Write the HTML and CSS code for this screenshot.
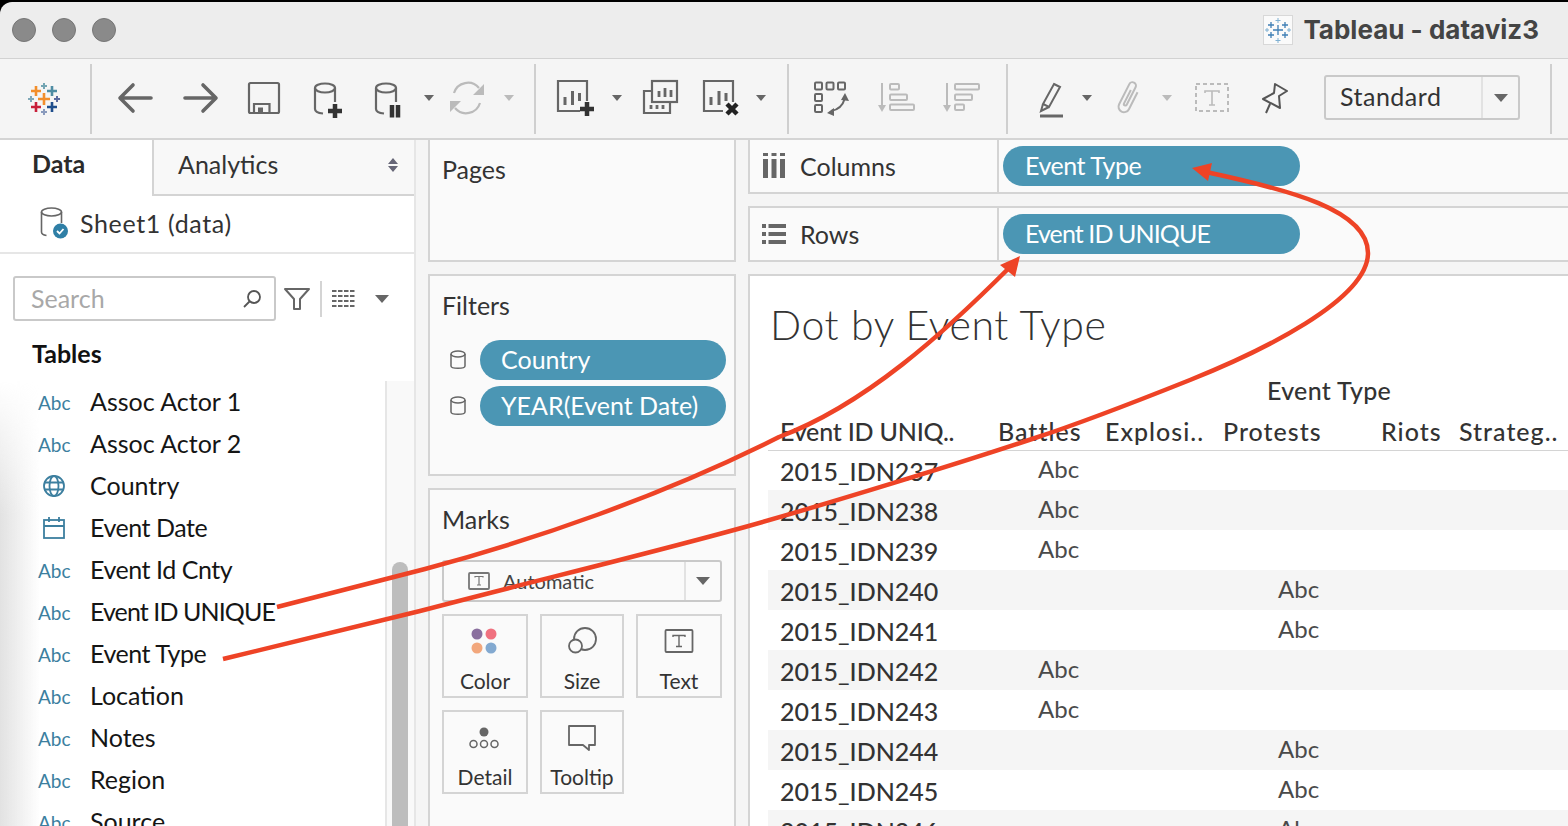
FILE: index.html
```html
<!DOCTYPE html>
<html lang="en">
<head>
<meta charset="utf-8">
<title>Tableau - dataviz3</title>
<link rel="stylesheet" href="styles.css">
</head>
<body>
<div class="app">
  <header class="titlebar">
    <div class="lights"><span class="light"></span><span class="light"></span><span class="light"></span></div>
    <div class="wintitle">
      <svg class="tile" width="30" height="30" viewBox="0 0 30 30"><rect x=".5" y=".5" width="29" height="29" fill="#fafafa" stroke="#d8d8d8"/><g stroke="#3f7fb5" stroke-width="1.300" fill="none"><path d="M15 10v10M10 15h10"/><path d="M8 7v6M5 10h6M22 7v6M19 10h6M8 17v6M5 20h6M22 17v6M19 20h6"/><path d="M15 3v5M12.500 5.500h5M15 23v5M12.500 25.500h5M4 13v4M2 15h4M26 13v4M24 15h4" stroke-width="1" stroke="#7fb0d2"/></g></svg>
      <span class="wintitle-text">Tableau - dataviz3</span>
    </div>
  </header>

  <nav class="toolbar">
    <svg class="logo" width="40" height="40" viewBox="24 78 40 40" fill="none" stroke-width="2.600"><path d="M38 99h12M44 93v12" stroke="#f28e2b"/><path d="M31 91h10M36 86v10" stroke="#f28e2b"/><path d="M47 91h10M52 86v10" stroke="#4e8ca3"/><path d="M31 107h10M36 102v10" stroke="#c8203a"/><path d="M47 107h10M52 102v10" stroke="#1f4e8c"/><path d="M41 86h6M44 83v6" stroke="#73a5b3" stroke-width="2"/><path d="M28 99h6M31 96v6" stroke="#7fa8b8" stroke-width="2"/><path d="M54 99h6M57 96v6" stroke="#5a6aa0" stroke-width="2"/><path d="M41 112h6M44 109v6" stroke="#8a9bbd" stroke-width="2"/></svg>
    <span class="sep"></span>
    <svg class="ico t-back" width="40" height="40" viewBox="0 0 40 40" fill="none" stroke="#666" stroke-width="3.600" stroke-linecap="round" stroke-linejoin="round"><path d="M35 20H5M17 7 4 20l13 13"/></svg>
    <svg class="ico t-fwd" width="40" height="40" viewBox="0 0 40 40" fill="none" stroke="#666" stroke-width="3.600" stroke-linecap="round" stroke-linejoin="round"><path d="M5 20h30M23 7l13 13-13 13"/></svg>
    <svg class="ico t-save" width="40" height="40" viewBox="0 0 40 40" fill="none" stroke="#666" stroke-width="2.200"><rect x="5" y="5" width="30" height="30" rx="1.500"/><path d="M10 35V26h15.500v9"/><rect x="14" y="29.500" width="5" height="5.500" fill="#666" stroke="none"/></svg>
    <svg class="ico t-ds" width="40" height="40" viewBox="0 0 40 40" fill="none" stroke="#666" stroke-width="2.200"><ellipse cx="18" cy="10" rx="10" ry="4.500"/><path d="M8 10v21c0 2.500 3 4 8 4.500M28 10v14"/><path d="M21 33h14M28 26v14" stroke="#333" stroke-width="4.500"/></svg>
    <svg class="ico t-pause" width="40" height="40" viewBox="0 0 40 40" fill="none" stroke="#666" stroke-width="2.200"><ellipse cx="18" cy="10" rx="10" ry="4.500"/><path d="M8 10v21c0 2.500 3 4 8 4.500M28 10v14"/><path d="M24 27v12.500M30 27v12.500" stroke="#333" stroke-width="4.500"/></svg>
    <span class="caret t-c1"></span>
    <svg class="ico t-refresh" width="40" height="40" viewBox="0 0 40 40" fill="none" stroke="#bbb" stroke-width="2.200"><path d="M7 15a14.500 14.500 0 0 1 25-5M33 25a14.500 14.500 0 0 1-25 5"/><path d="M37 6v11H26zM3 34V23h11z" fill="#bbb" stroke="none"/></svg>
    <span class="caret light-caret t-c2"></span>
    <span class="sep t-s2"></span>
    <svg class="ico t-new" width="40" height="40" viewBox="0 0 40 40" fill="none" stroke="#666" stroke-width="2.200"><path d="M25 33H3V3h29v20"/><path d="M10 19v8M17.500 13v14M24.500 15v8" stroke-width="3"/><path d="M25 31h14M32 24v14" stroke="#333" stroke-width="4.500"/></svg>
    <span class="caret t-c3"></span>
    <svg class="ico t-dup" width="40" height="40" viewBox="0 0 40 40" fill="none" stroke="#666" stroke-width="2.200"><rect x="12" y="3" width="25" height="21"/><path d="M12 13H4v22h26v-11"/><path d="M19 19v-6M25 19V10M31 19v-7" stroke-width="2.800"/><path d="M11 31v-4M17 31v-4M23 31v-4" stroke-width="2.800"/></svg>
    <svg class="ico t-clear" width="40" height="40" viewBox="0 0 40 40" fill="none" stroke="#666" stroke-width="2.200"><path d="M21 33H2V3h29v21"/><path d="M9 27v-8M17 27V13M24 23v-8" stroke-width="3"/><path d="M25 26l10 10M35 26 25 36" stroke="#222" stroke-width="4.500"/></svg>
    <span class="caret t-c4"></span>
    <span class="sep t-s3"></span>
    <svg class="ico t-swap" width="40" height="40" viewBox="0 0 40 40" fill="none" stroke="#666" stroke-width="2"><rect x="4" y="4.500" width="7" height="7" rx="1"/><rect x="15.500" y="4.500" width="7" height="7" rx="1"/><rect x="27" y="4.500" width="7" height="7" rx="1"/><rect x="4" y="16" width="7" height="7" rx="1"/><rect x="4" y="27" width="7" height="7" rx="1"/><path d="M20 33c7-1 12-6 14-13"/><path d="M34 15l4 8-8-1zM16 35l7-5v8z" fill="#666" stroke="none"/></svg>
    <svg class="ico t-asc" width="40" height="40" viewBox="0 0 40 40" fill="none" stroke="#bbb" stroke-width="2"><path d="M6 5v27"/><path d="M2 27h8l-4 7z" fill="#bbb" stroke="none"/><rect x="14" y="6" width="9" height="5.500" rx="1"/><rect x="14" y="16.500" width="17" height="5.500" rx="1"/><rect x="14" y="26.500" width="24" height="5.500" rx="1"/></svg>
    <svg class="ico t-desc" width="40" height="40" viewBox="0 0 40 40" fill="none" stroke="#bbb" stroke-width="2"><path d="M7 5v27"/><path d="M3 27h8l-4 7z" fill="#bbb" stroke="none"/><rect x="15" y="6" width="24" height="5.500" rx="1"/><rect x="15" y="16.500" width="17" height="5.500" rx="1"/><rect x="15" y="26.500" width="9" height="5.500" rx="1"/></svg>
    <span class="sep t-s4"></span>
    <svg class="ico t-high" width="40" height="40" viewBox="0 0 40 40" fill="none" stroke="#666" stroke-width="2"><path d="M23 6l6 3-11 20-6-3zM12 26l-2 7 8-4"/><path d="M9 38h23" stroke-width="3"/></svg>
    <span class="caret t-c5"></span>
    <svg class="ico t-clip" width="40" height="40" viewBox="0 0 40 40" fill="none" stroke="#bbb" stroke-width="2"><g transform="rotate(27 20 20)"><path d="M25 11v19a5.500 5.500 0 0 1-11 0V7.500a3.500 3.500 0 0 1 7 0V27a1.500 1.500 0 0 1-3 0V12"/></g></svg>
    <span class="caret light-caret t-c6"></span>
    <svg class="ico t-box" width="40" height="40" viewBox="0 0 40 40" fill="none" stroke="#bbb" stroke-width="2"><rect x="4" y="6" width="32" height="27" stroke-dasharray="4 3"/><path d="M13 15v-2h14v2M20 13v14M17 27h6" stroke-width="1.600"/></svg>
    <svg class="ico t-pin" width="40" height="40" viewBox="0 0 40 40" fill="none" stroke="#555" stroke-width="2" stroke-linejoin="round"><path d="M20 6l12 7-8 5 1 12L8 21l11-6zM15 26l-4 9"/></svg>
    <div class="select"><span class="select-text">Standard</span><span class="select-btn"><span class="caret big-caret"></span></span></div>
    <span class="sep t-s5"></span>
  </nav>

  <main class="main">
    <aside class="sidebar">
      <div class="tabs">
        <div class="tab-data">Data</div>
        <div class="tab-analytics"><span>Analytics</span>
          <svg class="updown" width="10" height="14" viewBox="0 0 10 14" fill="#667"><path d="M5 0l5 6H0zM5 14 0 8h10z"/></svg>
        </div>
      </div>
      <div class="source">
        <svg width="29" height="32" viewBox="0 0 29 32" fill="none" stroke="#666" stroke-width="1.600"><ellipse cx="11.500" cy="5" rx="10" ry="4"/><path d="M1.500 5v20c0 2 2 3 5 3.500M21.500 5v11"/><circle cx="20.500" cy="24" r="7.500" fill="#2f7fa6" stroke="none"/><path d="M17 24l2.500 2.500 4-4.500" stroke="#fff" stroke-width="1.800"/></svg>
        <span>Sheet1 (data)</span>
      </div>
      <div class="searchrow">
        <div class="search"><span class="search-text">Search</span>
          <svg width="20" height="20" viewBox="0 0 20 20" fill="none" stroke="#555" stroke-width="1.800"><circle cx="12" cy="8" r="6"/><path d="M7.500 12.500 2 18"/></svg>
        </div>
        <svg class="funnel" width="28" height="26" viewBox="0 0 28 26" fill="none" stroke="#666" stroke-width="2" stroke-linejoin="round"><path d="M2 3h24l-9 10v10h-6V13z"/></svg>
        <span class="vsep"></span>
        <svg class="listicon" width="24" height="20" viewBox="0 0 24 20" fill="none" stroke="#666" stroke-width="2" stroke-dasharray="4.500 1.500"><path d="M0 2h24M0 7h24M0 12h24M0 17h24"/></svg>
        <span class="caret big-caret list-caret"></span>
      </div>
      <h2 class="tables">Tables</h2>
      <div class="listwrap">
        <ul class="fields">
          <li><span class="abc">Abc</span><span>Assoc Actor 1</span></li>
          <li><span class="abc">Abc</span><span>Assoc Actor 2</span></li>
          <li><span class="abc"><svg width="24" height="24" viewBox="0 0 24 24" fill="none" stroke="#3c7f9f" stroke-width="1.800"><circle cx="12" cy="12" r="10"/><ellipse cx="12" cy="12" rx="4.500" ry="10"/><path d="M2 8.500h20M2 15.500h20"/></svg></span><span>Country</span></li>
          <li><span class="abc"><svg width="24" height="24" viewBox="0 0 24 24" fill="none" stroke="#3c7f9f" stroke-width="1.800"><rect x="2" y="4" width="20" height="18"/><path d="M2 10h20M7 1v5M17 1v5"/></svg></span><span class="ev">Event Date</span></li>
          <li><span class="abc">Abc</span><span class="ev">Event Id Cnty</span></li>
          <li><span class="abc">Abc</span><span class="caps">Event ID UNIQUE</span></li>
          <li><span class="abc">Abc</span><span class="ev">Event Type</span></li>
          <li><span class="abc">Abc</span><span>Location</span></li>
          <li><span class="abc">Abc</span><span>Notes</span></li>
          <li><span class="abc">Abc</span><span>Region</span></li>
          <li><span class="abc">Abc</span><span>Source</span></li>
        </ul>
        <div class="track"><div class="thumb"></div></div>
      </div>
    </aside>

    <section class="cards">
      <div class="card card-pages"><h3>Pages</h3></div>
      <div class="card card-filters">
        <h3>Filters</h3>
        <div class="filter"><svg class="cyl" width="18" height="20" viewBox="0 0 18 20" fill="none" stroke="#666" stroke-width="1.500"><ellipse cx="9" cy="4" rx="7" ry="3"/><path d="M2 4v12c0 3 14 3 14 0V4"/></svg><span class="pill">Country</span></div>
        <div class="filter"><svg class="cyl" width="18" height="20" viewBox="0 0 18 20" fill="none" stroke="#666" stroke-width="1.500"><ellipse cx="9" cy="4" rx="7" ry="3"/><path d="M2 4v12c0 3 14 3 14 0V4"/></svg><span class="pill">YEAR(Event Date)</span></div>
      </div>
      <div class="card card-marks">
        <h3>Marks</h3>
        <div class="marktype">
          <svg width="22" height="18" viewBox="0 0 22 18" fill="none" stroke="#777" stroke-width="1.800"><rect x="1" y="1" width="20" height="16" rx="1"/><path d="M7 5.500V4.500h8v1M11 4.500v8.500M9 13h4" stroke-width="1.200"/></svg>
          <span class="marktype-text">Automatic</span>
          <span class="marktype-btn"><span class="caret big-caret"></span></span>
        </div>
        <div class="markgrid">
          <div class="mark"><svg width="30" height="28" viewBox="0 0 30 28"><circle cx="8" cy="7" r="5.500" fill="#8a6f9e"/><circle cx="22" cy="7" r="5.500" fill="#f0717f"/><circle cx="8" cy="21" r="5.500" fill="#f2a77c"/><circle cx="22" cy="21" r="5.500" fill="#83a9d0"/></svg><span>Color</span></div>
          <div class="mark"><svg width="30" height="28" viewBox="0 0 30 28" fill="none" stroke="#666" stroke-width="1.800"><circle cx="18" cy="12" r="11"/><circle cx="8.500" cy="19" r="6.500" fill="#fafafa"/></svg><span>Size</span></div>
          <div class="mark"><svg width="30" height="28" viewBox="0 0 30 28" fill="none" stroke="#666" stroke-width="1.800"><rect x="1.500" y="3" width="27" height="22" rx="1"/><path d="M9 10V8.500h12V10M15 8.500v11M12 19.500h6" stroke-width="1.400"/></svg><span>Text</span></div>
          <div class="mark"><svg width="30" height="28" viewBox="0 0 30 28" fill="none" stroke="#666" stroke-width="1.500"><circle cx="15" cy="9" r="4.500" fill="#666" stroke="none"/><circle cx="4.500" cy="21" r="3.500"/><circle cx="15" cy="21" r="3.500"/><circle cx="25.500" cy="21" r="3.500"/></svg><span>Detail</span></div>
          <div class="mark"><svg width="30" height="28" viewBox="0 0 30 28" fill="none" stroke="#666" stroke-width="1.800" stroke-linejoin="round"><path d="M2 3h26v19h-6v5l-6-5H2z"/></svg><span>Tooltip</span></div>
        </div>
      </div>
    </section>

    <section class="work">
      <div class="shelf">
        <div class="shelf-label">
          <svg width="24" height="26" viewBox="0 0 24 26" fill="#666"><rect x="1" y="0" width="5" height="3"/><rect x="9.500" y="0" width="5" height="3"/><rect x="18" y="0" width="5" height="3"/><rect x="1" y="6" width="5" height="19"/><rect x="9.500" y="6" width="5" height="19"/><rect x="18" y="6" width="5" height="19"/></svg>
          <span>Columns</span>
        </div>
        <div class="shelf-body"><span class="pill pill-shelf ev">Event Type</span></div>
      </div>
      <div class="shelf">
        <div class="shelf-label">
          <svg width="24" height="26" viewBox="0 0 24 26" fill="#666"><rect x="0" y="3" width="4" height="4"/><rect x="6.500" y="3" width="17.500" height="4"/><rect x="0" y="11" width="4" height="4"/><rect x="6.500" y="11" width="17.500" height="4"/><rect x="0" y="19" width="4" height="4"/><rect x="6.500" y="19" width="17.500" height="4"/></svg>
          <span>Rows</span>
        </div>
        <div class="shelf-body"><span class="pill pill-shelf caps">Event ID UNIQUE</span></div>
      </div>
      <div class="viz">
        <h1 class="viz-title">Dot by Event Type</h1>
        <div class="viz-group">Event Type</div>
        <div class="viz-head">
          <span class="h-id">Event ID UNIQ..</span><span class="h-bat">Battles</span><span class="h-exp">Explosi..</span><span class="h-pro">Protests</span><span class="h-rio">Riots</span><span>Strateg..</span>
        </div>
        <div class="row"><span class="id">2015_IDN237</span><span class="val">Abc</span></div>
        <div class="row alt"><span class="id">2015_IDN238</span><span class="val">Abc</span></div>
        <div class="row"><span class="id">2015_IDN239</span><span class="val">Abc</span></div>
        <div class="row alt"><span class="id">2015_IDN240</span><span></span><span class="val">Abc</span></div>
        <div class="row"><span class="id">2015_IDN241</span><span></span><span class="val">Abc</span></div>
        <div class="row alt"><span class="id">2015_IDN242</span><span class="val">Abc</span></div>
        <div class="row"><span class="id">2015_IDN243</span><span class="val">Abc</span></div>
        <div class="row alt"><span class="id">2015_IDN244</span><span></span><span class="val">Abc</span></div>
        <div class="row"><span class="id">2015_IDN245</span><span></span><span class="val">Abc</span></div>
        <div class="row alt"><span class="id">2015_IDN246</span><span></span><span class="val">Abc</span></div>
      </div>
    </section>
  </main>

  <svg class="arrows" width="1568" height="826" viewBox="0 0 1568 826" fill="none" stroke="#ee4326" stroke-width="4.500">
    <path d="M277 607 425 569C530 541 660 497 779 437 865 405 945 332 1010 267"/>
    <path d="M1020 256 1000 265 1015 277Z" fill="#ee4326" stroke="none"/>
    <path d="M223 659 420 611C530 582 640 556 745 527 830 503 960 463 1035 438 1090 420 1140 400 1190 380 1260 352 1368 300 1368 253 1368 210 1290 190 1206 172"/>
    <path d="M1192 168 1212 163 1208 181Z" fill="#ee4326" stroke="none"/>
  </svg>
</div>
</body>
</html>
```

FILE: styles.css
```css
* { box-sizing: border-box; }
html, body { margin: 0; padding: 0; }
body {
  width: 1568px;
  height: 826px;
  overflow: hidden;
  background: #000;
  font-family: Lato, "Noto Sans", sans-serif;
  color: #333;
}
.app {
  position: relative;
  width: 1568px;
  height: 826px;
  padding-top: 2px;
  overflow: hidden;
  display: flex;
  flex-direction: column;
}

/* title bar */
.titlebar {
  height: 57px;
  flex: none;
  background: #ededed;
  border-top-left-radius: 12px;
  border-bottom: 1px solid #d2d2d2;
  display: flex;
  align-items: center;
  justify-content: space-between;
  padding: 0 29px 1px 12px;
}
.lights { display: flex; gap: 16px; }
.light {
  width: 24px;
  height: 24px;
  border-radius: 50%;
  background: #8a8a8a;
  border: 1px solid #767676;
}
.wintitle { display: flex; align-items: center; gap: 10px; }
.tile { display: block; }
.wintitle-text {
  font-family: Inter, "Liberation Sans", sans-serif;
  font-weight: 700;
  font-size: 26px;
  color: #444;
}

/* toolbar */
.toolbar {
  height: 79px;
  flex: none;
  background: #f5f5f5;
  display: flex;
  align-items: center;
  padding: 0 0 1px 24px;
}
.logo { flex: none; }
.ico { flex: none; display: block; }
.sep { width: 2px; height: 70px; background: #cfcfcf; flex: none; margin: 1px 0 0 26px; }
.caret {
  display: inline-block;
  width: 0;
  height: 0;
  flex: none;
  border-left: 5px solid transparent;
  border-right: 5px solid transparent;
  border-top: 6px solid #666;
}
.big-caret {
  border-left-width: 7px;
  border-right-width: 7px;
  border-top-width: 8px;
}
.light-caret { border-top-color: #bbb; }
.t-back { margin-left: 24px; }
.t-fwd { margin-left: 24px; }
.t-save { margin-left: 24px; }
.t-ds { margin-left: 23px; }
.t-pause { margin-left: 21px; }
.t-c1 { margin-left: 16px; }
.t-refresh { margin-left: 13px; }
.t-c2 { margin-left: 17px; }
.sep.t-s2 { margin-left: 20px; }
.t-new { margin-left: 19px; }
.t-c3 { margin-left: 17px; }
.t-dup { margin-left: 18px; }
.t-clear { margin-left: 22px; }
.t-c4 { margin-left: 14px; }
.sep.t-s3 { margin-left: 21px; }
.t-swap { margin-left: 22px; }
.t-asc { margin-left: 25px; }
.t-desc { margin-left: 24px; }
.sep.t-s4 { margin-left: 26px; }
.t-high { margin-left: 23px; }
.t-c5 { margin-left: 11px; }
.t-clip { margin-left: 17px; }
.t-c6 { margin-left: 13px; }
.t-box { margin-left: 20px; }
.t-pin { margin-left: 23px; }
.select {
  flex: none;
  margin: 0 0 1px 29px;
  width: 196px;
  height: 45px;
  border: 2px solid #c9c9c9;
  border-radius: 3px;
  display: flex;
  align-items: center;
}
.select-text { flex: 1; padding: 0 0 3px 14px; font-size: 25px; letter-spacing: .5px; color: #333; }
.select-btn {
  width: 37px;
  height: 100%;
  border-left: 2px solid #e2e2e2;
  display: flex;
  align-items: center;
  justify-content: center;
}
.sep.t-s5 { margin-left: 30px; }

/* main */
.main {
  flex: 1;
  min-height: 0;
  display: flex;
  background: #f5f5f5;
  border-top: 2px solid #d4d4d4;
}

/* sidebar */
.sidebar {
  flex: none;
  width: 416px;
  background: #fff;
  border-right: 2px solid #e6e6e6;
  display: flex;
  flex-direction: column;
  overflow: hidden;
}
.tabs { display: flex; height: 56px; flex: none; }
.tab-data {
  width: 152px;
  padding: 8px 0 0 32px;
  font-size: 25px;
  font-weight: 700;
  color: #2b2b2b;
}
.tab-analytics {
  flex: 1;
  background: #f8f8f8;
  border-left: 2px solid #d4d4d4;
  border-bottom: 2px solid #d4d4d4;
  padding: 9px 16px 0 24px;
  font-size: 25px;
  color: #333;
  display: flex;
  justify-content: space-between;
}
.updown { margin-top: 9px; }
.source {
  height: 58px;
  flex: none;
  display: flex;
  align-items: center;
  gap: 11px;
  padding: 0 0 2px 40px;
  border-bottom: 2px solid #e6e6e6;
  font-size: 25px;
  letter-spacing: .65px;
  color: #333;
}
.searchrow {
  flex: none;
  display: flex;
  align-items: center;
  margin-top: 22px;
  padding-left: 13px;
}
.search {
  width: 263px;
  height: 45px;
  border: 2px solid #c9c9c9;
  border-radius: 3px;
  display: flex;
  align-items: center;
  justify-content: space-between;
  padding: 0 12px 0 16px;
  font-size: 25px;
  color: #a8a8a8;
}
.search-text { padding-bottom: 2px; }
.funnel { margin-left: 7px; }
.vsep { width: 2px; height: 36px; background: #d4d4d4; margin-left: 9px; }
.listicon { margin-left: 10px; }
.list-caret { margin-left: 19px; }
.tables {
  flex: none;
  margin: 16px 0 0;
  padding-left: 32px;
  height: 44px;
  font-size: 25px;
  line-height: 32px;
  font-weight: 700;
  color: #111;
}
.listwrap {
  position: relative;
  flex: 1;
  min-height: 0;
  display: flex;
}
.listwrap::before {
  content: "";
  position: absolute;
  left: 0;
  top: 0;
  bottom: 0;
  width: 40px;
  background: linear-gradient(90deg, #e2e2e2, rgba(255,255,255,0));
  -webkit-mask-image: linear-gradient(180deg, transparent, #000 30%);
  mask-image: linear-gradient(180deg, transparent, #000 30%);
}
.fields {
  position: relative;
  flex: none;
  width: 385px;
  list-style: none;
  margin: 0;
  padding: 0;
  font-size: 25px;
  color: #151515;
}
.fields li {
  height: 42px;
  display: flex;
  align-items: center;
  padding-bottom: 2px;
}
.ev { letter-spacing: -.45px; }
.caps { letter-spacing: -.9px; }
.abc {
  width: 90px;
  padding: 2px 0 0 38px;
  flex: none;
  font-size: 19px;
  color: #3c7f9f;
  display: flex;
}
.abc svg { margin-left: 4px; display: block; }
.track {
  flex: 1;
  background: #f9f9f9;
  border-left: 2px solid #e6e6e6;
  padding: 181px 0 0 5px;
}
.thumb {
  width: 16px;
  height: 400px;
  background: #bdbdbd;
  border-radius: 8px 8px 0 0;
}

/* middle cards */
.cards {
  flex: none;
  width: 308px;
  margin-left: 12px;
  margin-top: -2px;
  display: flex;
  flex-direction: column;
  gap: 12px;
}
.card {
  flex: none;
  background: #fafafa;
  border: 2px solid #d4d4d4;
  padding: 0 12px;
}
.card h3 {
  margin: 0;
  font-size: 25px;
  font-weight: 400;
  color: #333;
}
.card-pages { height: 124px; padding-top: 14px; }
.card-filters { height: 202px; padding-top: 14px; }
.card-filters h3 { margin-bottom: 17px; }
.filter { display: flex; align-items: center; height: 46px; }
.cyl { flex: none; margin-left: 7px; }
.pill {
  display: flex;
  align-items: center;
  height: 40px;
  flex: none;
  border-radius: 20px;
  background: #4b96b4;
  color: #fff;
  font-size: 25px;
  padding: 0 0 2px 21px;
}
.filter .pill { width: 246px; margin-left: 13px; }
.card-marks { height: 346px; padding-top: 14px; }
.marktype {
  margin-top: 26px;
  width: 280px;
  height: 42px;
  border: 2px solid #c9c9c9;
  border-radius: 3px;
  display: flex;
  align-items: center;
  padding-left: 24px;
}
.marktype-text { flex: 1; margin-left: 13px; font-size: 20px; color: #444; }
.marktype-btn {
  width: 36px;
  height: 100%;
  border-left: 2px solid #e2e2e2;
  display: flex;
  align-items: center;
  justify-content: center;
}
.markgrid {
  margin-top: 12px;
  display: grid;
  grid-template-columns: 86px 84px 86px;
  grid-auto-rows: 84px;
  gap: 12px;
}
.mark {
  border: 2px solid #d4d4d4;
  display: flex;
  flex-direction: column;
  align-items: center;
  padding-top: 11px;
  font-size: 21px;
  color: #333;
}
.mark:nth-child(3n+1) svg { margin-right: 3px; }
.mark span { margin-top: 13px; line-height: 26px; }

/* work area */
.work {
  flex: 1;
  min-width: 0;
  margin: -2px -6px 0 12px;
  display: flex;
  flex-direction: column;
  gap: 12px;
}
.shelf {
  flex: none;
  height: 56px;
  display: flex;
  background: #fafafa;
  border: 2px solid #d4d4d4;
  border-right: none;
}
.shelf-label {
  width: 249px;
  flex: none;
  border-right: 2px solid #d4d4d4;
  display: flex;
  align-items: center;
  gap: 14px;
  padding-left: 12px;
  font-size: 25px;
  color: #333;
}
.shelf-body { flex: 1; display: flex; align-items: center; padding-left: 4px; }
.pill-shelf { width: 297px; padding-left: 22px; }
.viz {
  flex: 1;
  min-height: 0;
  background: #fff;
  border: 2px solid #d4d4d4;
  border-bottom: none;
  border-right: none;
  padding-left: 18px;
  overflow: hidden;
}
.viz-title {
  margin: 22px 0 0 2px;
  font-size: 41px;
  line-height: 54px;
  font-weight: 300;
  letter-spacing: .6px;
  color: #333;
}
.viz-group {
  margin: 23px 0 0 499px;
  height: 30px;
  font-size: 25px;
  line-height: 30px;
  font-weight: 500;
  letter-spacing: .3px;
  color: #333;
}
.viz-head {
  height: 34px;
  margin-top: 11px;
  display: flex;
  padding-left: 12px;
  font-size: 25px;
  font-weight: 500;
  line-height: 30px;
  letter-spacing: 1px;
  color: #333;
  box-shadow: 0 1px 0 #d4d4d4;
  white-space: nowrap;
}
.h-id { width: 218px; flex: none; letter-spacing: -.2px; }
.h-bat { width: 107px; flex: none; }
.h-exp { width: 118px; flex: none; }
.h-pro { width: 158px; flex: none; }
.h-rio { width: 78px; flex: none; }
.row {
  height: 40px;
  display: grid;
  grid-template-columns: 258px 240px 240px;
  padding-left: 12px;
  align-items: center;
}
.alt { background: #f5f5f5; }
.id { font-size: 25px; font-weight: 500; color: #333; padding-top: 2px; }
.val { font-size: 24px; color: #4a4a4a; font-weight: 400; padding-bottom: 3px; }

/* annotation overlay */
.arrows { position: absolute; left: 0; top: 0; pointer-events: none; }
```
